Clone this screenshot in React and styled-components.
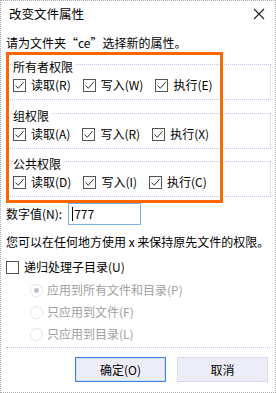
import React from 'react'
import styled, { createGlobalStyle } from 'styled-components'

const Global = createGlobalStyle`
  html, body {
    margin: 0;
    padding: 0;
    background: #fff;
  }
  body {
    font-family: "Noto Sans CJK SC", "Noto Sans", sans-serif;
    font-size: 12px;
    color: #000;
  }
`

const Window = styled.div`
  position: relative;
  box-sizing: border-box;
  width: 276px;
  height: 393px;
  border: 1px dotted #a8a8a8;
  background: #fff;
  display: flex;
  flex-direction: column;
`

const TitleBar = styled.div`
  height: 25px;
  display: flex;
  align-items: center;
  justify-content: space-between;
  padding: 0 10px 0 8px;
  font-size: 12.5px;
  line-height: 16px;
`

const Body = styled.div`
  display: flex;
  flex-direction: column;
  padding: 9px 4px 0 5px;
  line-height: 16px;
`

const Line = styled.div`
  line-height: 16px;
  margin-top: ${p => p.$mt || 0}px;
  color: ${p => (p.$disabled ? '#a0a0a0' : '#000')};
`

const Group = styled.fieldset`
  margin: ${p => p.$mt || 0}px 0 0 0;
  padding: 3px 0 6px 6px;
  border: 1px dotted #c4c4ee;
  min-width: 0;
`

const Legend = styled.legend`
  padding: 6px 2px 0 0;
  line-height: 14px;
  font-size: 12px;
`

const Row = styled.div`
  display: flex;
  align-items: center;
  height: 16px;
`

const Check = styled.label`
  display: inline-flex;
  align-items: center;
  gap: 5px;
  margin-right: 12px;
  white-space: nowrap;
`

const Box = styled.span`
  box-sizing: border-box;
  width: 13px;
  height: 13px;
  border: 1px solid #555;
  display: inline-flex;
  align-items: center;
  justify-content: center;
  background: #fff;
`

const NumRow = styled.div`
  display: flex;
  align-items: center;
  margin-top: 6px;
  height: 22px;
`

const NumInput = styled.div`
  box-sizing: border-box;
  width: 73px;
  height: 22px;
  margin-left: 6px;
  border: 1px solid #7fb2ea;
  padding-left: 3px;
  display: flex;
  align-items: center;
  font-size: 12px;
`

const Caret = styled.span`
  width: 1px;
  height: 14px;
  background: #000;
  margin-right: 1px;
`

const RadioRow = styled.div`
  display: flex;
  align-items: center;
  gap: 4px;
  height: 22px;
  padding-left: 24px;
  color: #a0a0a0;
  margin-top: ${p => p.$mt || 0}px;
`

const Radio = styled.span`
  box-sizing: border-box;
  width: 13px;
  height: 13px;
  border-radius: 50%;
  border: 1px dotted #c4c4d4;
  display: inline-flex;
  align-items: center;
  justify-content: center;
  &::after {
    content: '';
    width: 5px;
    height: 5px;
    border-radius: 50%;
    background: ${p => (p.$on ? '#c0c0c8' : 'transparent')};
  }
`

const Separator = styled.div`
  margin-top: 2px;
  border-top: 1px dotted #c4c4ee;
  margin-right: 1px;
`

const Buttons = styled.div`
  display: flex;
  justify-content: flex-end;
  gap: 11px;
  margin-top: 9px;
  padding-right: 3px;
`

const Button = styled.div`
  box-sizing: border-box;
  width: 91px;
  height: 25px;
  display: flex;
  align-items: center;
  justify-content: center;
  font-size: 12px;
  background: #ededf7;
  border: ${p => (p.$primary ? '1px solid #3d85dc' : '1px dotted #c8c8ea')};
  box-shadow: ${p => (p.$primary ? 'inset 0 0 0 1px #cfe0f6' : 'none')};
`

const Highlight = styled.div`
  position: absolute;
  left: 5px;
  top: 51px;
  width: 217px;
  height: 151px;
  box-sizing: border-box;
  border: 3px solid #ff6600;
  pointer-events: none;
`

const Tick = () => (
  <svg width='11' height='11' viewBox='0 0 11 11'>
    <path d='M1.5 5.5 L4.3 8.3 L9.5 2.2' fill='none' stroke='#333' strokeWidth='1' />
  </svg>
)

const CheckItem = ({ label, checked = true }) => (
  <Check>
    <Box>{checked && <Tick />}</Box>
    {label}
  </Check>
)

const groups = [
  { title: '所有者权限', items: ['读取(R)', '写入(W)', '执行(E)'], mt: 0 },
  { title: '组权限', items: ['读取(A)', '写入(R)', '执行(X)'], mt: 3 },
  { title: '公共权限', items: ['读取(D)', '写入(I)', '执行(C)'], mt: 2 }
]

export default function App() {
  return (
    <>
      <Global />
      <Window>
        <TitleBar>
          <span>改变文件属性</span>
          <svg width='12' height='12' viewBox='0 0 12 12'>
            <path d='M1 1 L11 11 M11 1 L1 11' stroke='#222' strokeWidth='1.1' />
          </svg>
        </TitleBar>
        <Body>
          <Line>请为文件夹“ce”选择新的属性。</Line>
          <div style={{ marginTop: 3 }}>
            {groups.map(g => (
              <Group key={g.title} $mt={g.mt}>
                <Legend>{g.title}</Legend>
                <Row>
                  {g.items.map(i => <CheckItem key={i} label={i} />)}
                </Row>
              </Group>
            ))}
          </div>
          <NumRow>
            <span>数字值(N):</span>
            <NumInput><Caret />777</NumInput>
          </NumRow>
          <Line $mt={9}>您可以在任何地方使用 x 来保持原先文件的权限。</Line>
          <Row style={{ marginTop: 9 }}>
            <CheckItem label='递归处理子目录(U)' checked={false} />
          </Row>
          <RadioRow $mt={4}><Radio $on />应用到所有文件和目录(P)</RadioRow>
          <RadioRow><Radio />只应用到文件(F)</RadioRow>
          <RadioRow><Radio />只应用到目录(L)</RadioRow>
          <Separator />
          <Buttons>
            <Button $primary>确定(O)</Button>
            <Button>取消</Button>
          </Buttons>
        </Body>
        <Highlight />
      </Window>
    </>
  )
}
